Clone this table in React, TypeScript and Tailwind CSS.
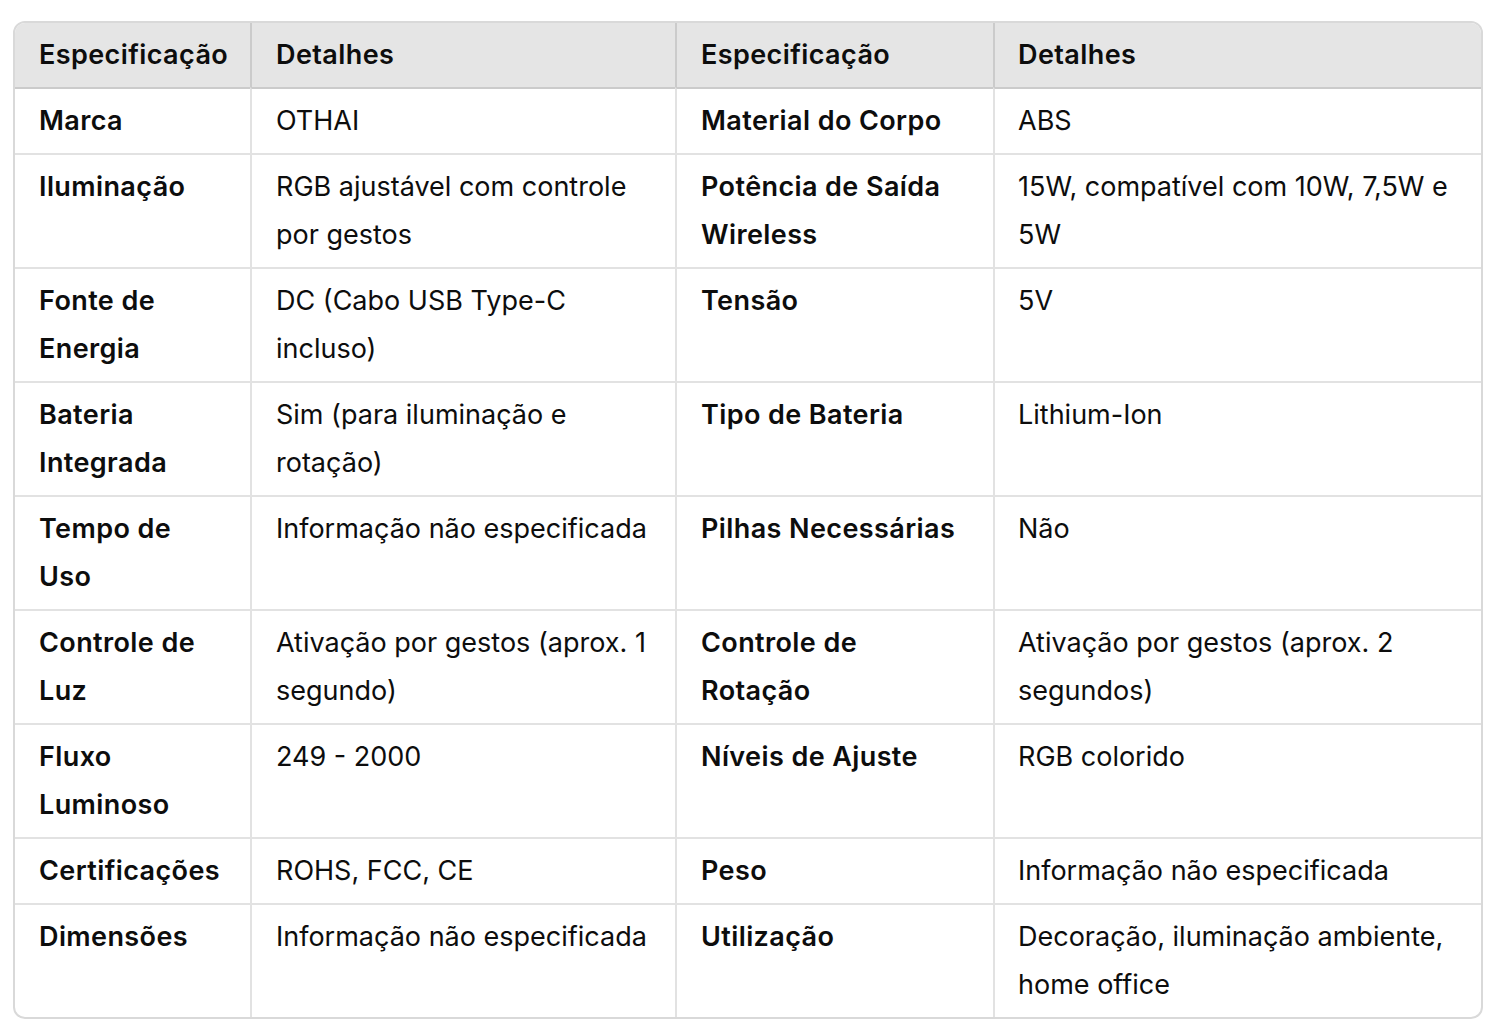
const rows: [string, string, string, string][] = [
  ["Marca", "OTHAI", "Material do Corpo", "ABS"],
  ["Iluminação", "RGB ajustável com controle por gestos", "Potência de Saída Wireless", "15W, compatível com 10W, 7,5W e 5W"],
  ["Fonte de Energia", "DC (Cabo USB Type-C incluso)", "Tensão", "5V"],
  ["Bateria Integrada", "Sim (para iluminação e rotação)", "Tipo de Bateria", "Lithium-Ion"],
  ["Tempo de Uso", "Informação não especificada", "Pilhas Necessárias", "Não"],
  ["Controle de Luz", "Ativação por gestos (aprox. 1 segundo)", "Controle de Rotação", "Ativação por gestos (aprox. 2 segundos)"],
  ["Fluxo Luminoso", "249 - 2000", "Níveis de Ajuste", "RGB colorido"],
  ["Certificações", "ROHS, FCC, CE", "Peso", "Informação não especificada"],
  ["Dimensões", "Informação não especificada", "Utilização", "Decoração, iluminação ambiente, home office"],
];

const headers = ["Especificação", "Detalhes", "Especificação", "Detalhes"];

export default function App() {
  return (
    <div className="min-h-screen bg-white pl-[13px] pt-[21px] font-['Inter',sans-serif] text-[27px] leading-[48px] text-[#0d0d0d]">
      <div className="w-[1470px] overflow-hidden rounded-[12px] border-2 border-[#d9d9d9]">
        <div className="grid grid-cols-[235px_425px_318px_488px]">
          {headers.map((h, i) => (
            <div
              key={i}
              className={`bg-[#e5e5e5] px-6 py-2 font-semibold tracking-[0.4px] ${i > 0 ? "border-l-2 border-[#cbcbcb]" : ""} ${i === 3 ? "pl-[23px]" : ""}`}
            >
              {h}
            </div>
          ))}
          {rows.map((r, ri) =>
            r.map((c, ci) => (
              <div
                key={`${ri}-${ci}`}
                className={`border-t-2 px-6 py-2 ${ri === 0 ? "border-[#cbcbcb]" : "border-[#e2e2e2]"} ${
                  ci > 0 ? "border-l-2 border-l-[#e2e2e2]" : ""
                } ${ci % 2 === 0 ? "font-semibold tracking-[0.4px]" : ""} ${ci === 3 ? "pl-[23px]" : ""}`}
              >
                {c}
              </div>
            ))
          )}
        </div>
      </div>
    </div>
  );
}
